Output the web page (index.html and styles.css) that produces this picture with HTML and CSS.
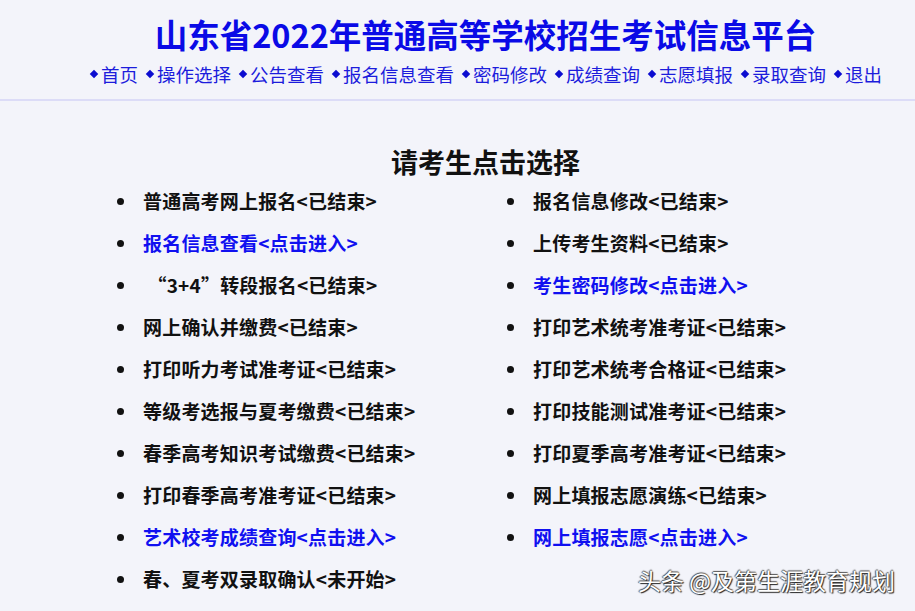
FILE: index.html
```html
<!DOCTYPE html>
<html lang="zh-CN">
<head>
  <meta charset="UTF-8" />
  <title>山东省2022年普通高等学校招生考试信息平台</title>
  <link rel="stylesheet" href="styles.css">
</head>
<body>
  <!-- Header -->
  <header class="top">
    <h1 class="site-title">山东省2022年普通高等学校招生考试信息平台</h1>
    <nav class="menu">
      <a href="#">首页</a>
      <a href="#">操作选择</a>
      <a href="#">公告查看</a>
      <a href="#">报名信息查看</a>
      <a href="#">密码修改</a>
      <a href="#">成绩查询</a>
      <a href="#">志愿填报</a>
      <a href="#">录取查询</a>
      <a href="#">退出</a>
    </nav>
  </header>

  <!-- Choice list -->
  <section class="choose">
    <h2>请考生点击选择</h2>
    <ul class="choice-list">
      <li>普通高考网上报名&lt;已结束&gt;</li>
      <li>报名信息修改&lt;已结束&gt;</li>
      <li><a href="#">报名信息查看&lt;点击进入&gt;</a></li>
      <li>上传考生资料&lt;已结束&gt;</li>
      <li>&nbsp;“3+4”转段报名&lt;已结束&gt;</li>
      <li><a href="#">考生密码修改&lt;点击进入&gt;</a></li>
      <li>网上确认并缴费&lt;已结束&gt;</li>
      <li>打印艺术统考准考证&lt;已结束&gt;</li>
      <li>打印听力考试准考证&lt;已结束&gt;</li>
      <li>打印艺术统考合格证&lt;已结束&gt;</li>
      <li>等级考选报与夏考缴费&lt;已结束&gt;</li>
      <li>打印技能测试准考证&lt;已结束&gt;</li>
      <li>春季高考知识考试缴费&lt;已结束&gt;</li>
      <li>打印夏季高考准考证&lt;已结束&gt;</li>
      <li>打印春季高考准考证&lt;已结束&gt;</li>
      <li>网上填报志愿演练&lt;已结束&gt;</li>
      <li><a href="#">艺术校考成绩查询&lt;点击进入&gt;</a></li>
      <li><a href="#">网上填报志愿&lt;点击进入&gt;</a></li>
      <li>春、夏考双录取确认&lt;未开始&gt;</li>
    </ul>
  </section>

  <div class="watermark">头条 @及第生涯教育规划</div>
</body>
</html>
```

FILE: styles.css
```css
html, body {
  margin: 0;
  height: 100%;
}
body {
  font-family: "Noto Sans CJK SC", "Noto Sans", sans-serif;
  background-color: #f3f4fa;
  color: #111;
  overflow: hidden;
  position: relative;
}
.top {
  height: 101px;
  border-bottom: 2px solid #dcdcf7;
  padding-left: 56px;
  text-align: center;
  box-sizing: border-box;
}
.site-title {
  margin: 0;
  padding-top: 11px;
  font-size: 32.5px;
  line-height: 46px;
  color: #0a0ae6;
  font-weight: bold;
}
.menu {
  display: flex;
  justify-content: center;
  gap: 7px;
  margin-top: 4px;
  font-size: 18.5px;
  line-height: 26px;
  font-weight: 400;
}
.menu a {
  display: flex;
  align-items: center;
  gap: 2px;
  color: #1c1cdc;
  text-decoration: none;
}
.menu a::before {
  content: "";
  width: 6px;
  height: 6px;
  background: #0c0cd0;
  transform: rotate(45deg);
  margin: 0 2px;
}
.choose {
  padding-left: 56px;
}
.choose h2 {
  margin: 0;
  padding-top: 43px;
  text-align: center;
  font-size: 27px;
  line-height: 36px;
  font-weight: bold;
}
.choice-list {
  list-style: none;
  margin: 0 0 0 44px;
  padding: 0;
  display: grid;
  grid-template-columns: 390px 390px;
  grid-auto-rows: 42px;
}
.choice-list li {
  position: relative;
  padding-left: 43px;
  font-size: 19px;
  line-height: 42px;
  font-weight: bold;
  letter-spacing: 0.2px;
  white-space: nowrap;
}
.choice-list li::before {
  content: "";
  position: absolute;
  left: 17px;
  top: 18px;
  width: 7px;
  height: 7px;
  border-radius: 50%;
  background: #111;
}
.choice-list a {
  color: #1010f0;
  text-decoration: none;
}
.watermark {
  position: absolute;
  right: 20px;
  bottom: 16px;
  font-size: 23px;
  line-height: 30px;
  color: #fff;
  text-shadow: 1px 1px 1px #222, -1px 0 1px #555, 0 -1px 1px #555;
}
```
